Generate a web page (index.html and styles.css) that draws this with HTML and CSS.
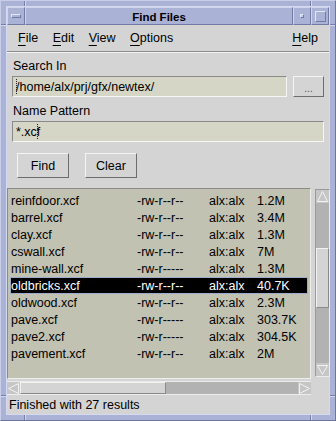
FILE: index.html
```html
<!DOCTYPE html>
<html>
<head>
<meta charset="utf-8">
<title>Find Files</title>
<link rel="stylesheet" href="styles.css">
</head>
<body>
<div class="window">
  <div class="inner">
    <div class="titlebar">
      <div class="tb-btn tb-menu"><span class="minus"></span></div>
      <div class="tb-title">Find Files</div>
      <div class="tb-btn tb-min"><span class="dot"></span></div>
      <div class="tb-btn tb-max"><span class="sq"></span></div>
    </div>
    <div class="client">
      <div class="menubar">
        <span class="mi"><u>F</u>ile</span>
        <span class="mi"><u>E</u>dit</span>
        <span class="mi"><u>V</u>iew</span>
        <span class="mi"><u>O</u>ptions</span>
        <span class="mi help"><u>H</u>elp</span>
      </div>
      <div class="form">
        <div class="label">Search In</div>
        <div class="pathrow">
          <div class="input path"><span class="caret"></span>/home/alx/prj/gfx/newtex/</div>
          <div class="btn dots">...</div>
        </div>
        <div class="label label2">Name Pattern</div>
        <div class="input pattern">*.xc<span class="caret"></span>f</div>
        <div class="buttons">
          <div class="btn act">Find</div>
          <div class="btn act">Clear</div>
        </div>
      </div>
      <div class="results">
        <div class="list">
          <div class="row"><span>reinfdoor.xcf</span><span>-rw-r--r--</span><span>alx:alx</span><span>1.2M</span></div>
          <div class="row"><span>barrel.xcf</span><span>-rw-r--r--</span><span>alx:alx</span><span>3.4M</span></div>
          <div class="row"><span>clay.xcf</span><span>-rw-r--r--</span><span>alx:alx</span><span>1.3M</span></div>
          <div class="row"><span>cswall.xcf</span><span>-rw-r--r--</span><span>alx:alx</span><span>7M</span></div>
          <div class="row"><span>mine-wall.xcf</span><span>-rw-r-----</span><span>alx:alx</span><span>1.3M</span></div>
          <div class="row sel"><span>oldbricks.xcf</span><span>-rw-r--r--</span><span>alx:alx</span><span>40.7K</span></div>
          <div class="row"><span>oldwood.xcf</span><span>-rw-r--r--</span><span>alx:alx</span><span>2.3M</span></div>
          <div class="row"><span>pave.xcf</span><span>-rw-r-----</span><span>alx:alx</span><span>303.7K</span></div>
          <div class="row"><span>pave2.xcf</span><span>-rw-r-----</span><span>alx:alx</span><span>304.5K</span></div>
          <div class="row"><span>pavement.xcf</span><span>-rw-r--r--</span><span>alx:alx</span><span>2M</span></div>
        </div>
        <div class="vscroll">
          <div class="arrow"><svg width="13" height="13" viewBox="0 0 13 13"><polygon points="6.5,1.5 11.5,11.5 1.5,11.5" fill="none" stroke="#f2f2f2" stroke-width="1"/></svg></div>
          <div class="vtrack">
            <div class="vthumb"></div>
          </div>
          <div class="arrow"><svg width="13" height="12" viewBox="0 0 13 12"><polygon points="1.5,1.5 11.5,1.5 6.5,10.5" fill="none" stroke="#f2f2f2" stroke-width="1"/></svg></div>
        </div>
        <div class="hscroll">
          <div class="arrow h"><svg width="13" height="13" viewBox="0 0 13 13"><polygon points="1.5,6.5 11.5,1.5 11.5,11.5" fill="none" stroke="#f2f2f2" stroke-width="1"/></svg></div>
          <div class="htrack"><div class="hthumb"></div></div>
          <div class="arrow h"><svg width="13" height="13" viewBox="0 0 13 13"><polygon points="1.5,1.5 11.5,6.5 1.5,11.5" fill="none" stroke="#f2f2f2" stroke-width="1"/></svg></div>
        </div>
      </div>
      <div class="status">Finished with 27 results</div>
    </div>
  </div>
</div>
</body>
</html>
```
FILE: styles.css
```css
* { box-sizing: border-box; }
html, body { margin: 0; padding: 0; }
body {
  background: #aab2d6;
  font-family: "Liberation Sans", Arial, sans-serif;
  font-size: 12.5px;
  color: #000;
}
.window {
  width: 336px;
  height: 421px;
  padding: 5px;
  border: 1px solid;
  border-color: #c9cee9 #6e769e #6e769e #c9cee9;
  background-color: #aab2d6;
  background-origin: border-box;
  background-image:
    linear-gradient(to right, transparent 24px, #767ea8 24px, #767ea8 25px, #d4d8ef 25px, #d4d8ef 26px, transparent 26px, transparent 310px, #767ea8 310px, #767ea8 311px, #d4d8ef 311px, #d4d8ef 312px, transparent 312px),
    linear-gradient(to bottom, transparent 24px, #767ea8 24px, #767ea8 25px, #d4d8ef 25px, #d4d8ef 26px, transparent 26px, transparent 395px, #767ea8 395px, #767ea8 396px, #d4d8ef 396px, #d4d8ef 397px, transparent 397px);
}
.inner {
  height: 100%;
  border: 1px solid #d6daf0;
  display: flex;
  flex-direction: column;
}
.titlebar {
  height: 18px;
  display: flex;
  flex: none;
  background: #aab2d6;
}
.tb-btn, .tb-title {
  border: 1px solid;
  border-color: #d0d5ee #737ba5 #737ba5 #d0d5ee;
  display: flex;
  align-items: center;
  justify-content: center;
}
.tb-btn { width: 18px; flex: none; }
.tb-title {
  flex: 1;
  font-weight: bold;
  font-size: 11.5px;
  padding-top: 1px;
}
.minus {
  width: 10px;
  height: 4px;
  border: 1px solid;
  border-color: #e2e6f8 #737ba5 #737ba5 #e2e6f8;
}
.dot {
  width: 4px;
  height: 4px;
  border: 1px solid;
  border-color: #e2e6f8 #737ba5 #737ba5 #e2e6f8;
  background: #c8cde8;
}
.sq {
  width: 11px;
  height: 11px;
  border: 1px solid;
  border-color: #e2e6f8 #737ba5 #737ba5 #e2e6f8;
}
.client {
  flex: 1;
  background: #d4d4d4;
  display: flex;
  flex-direction: column;
}
.menubar {
  height: 27px;
  flex: none;
  display: flex;
  align-items: center;
  padding: 0 11px 1px 11px;
  gap: 14.5px;
  border-bottom: 1px solid #8c8c8c;
  box-shadow: 0 1px 0 #f2f2f2;
}
.mi u {
  text-decoration: underline;
  text-underline-offset: 3px;
  text-decoration-thickness: 1px;
}
.help { margin-left: auto; }
.form {
  padding: 6px 5px 0 5px;
  display: flex;
  flex-direction: column;
  flex: none;
}
.label {
  height: 16px;
  line-height: 16px;
  margin-bottom: 2px;
  padding-left: 1px;
}
.label2 { margin-top: 6px; }
.pathrow {
  display: flex;
  gap: 6px;
}
.input {
  height: 21px;
  background: #d6d6c6;
  border: 1px solid;
  border-color: #8a8a8a #f6f6f6 #f6f6f6 #8a8a8a;
  display: flex;
  align-items: center;
  padding-left: 3px;
  white-space: nowrap;
}
.path { flex: 1; }
.caret {
  display: inline-block;
  width: 3px;
  height: 15px;
  margin-right: -2px;
  margin-left: -1px;
  border-left: 1px dotted #222;
  position: relative;
  left: 1px;
}
.btn {
  background: #d4d4d4;
  border: 1px solid;
  border-color: #f4f4f4 #6c6c6c #6c6c6c #f4f4f4;
  display: flex;
  align-items: center;
  justify-content: center;
}
.dots {
  width: 31px;
  height: 21px;
  color: #555;
  font-size: 10px;
  padding-top: 3px;
}
.buttons {
  display: flex;
  gap: 16px;
  margin: 11px 0 0 5px;
}
.act {
  height: 25px;
  width: 52px;
}
.results {
  margin-top: 10px;
  display: grid;
  grid-template-columns: 304px 1fr;
  grid-template-rows: 191px auto;
  row-gap: 2px;
}
.list {
  background: #c2c2b2;
  border: 1px solid;
  border-color: #8a8a8a #eeeeee #eeeeee #8a8a8a;
  padding-top: 3px;
  overflow: hidden;
}
.row {
  height: 17px;
  margin: 0 2px 0 2px;
  padding-left: 1px;
  display: grid;
  grid-template-columns: 126px 72px 48px 1fr;
  align-items: center;
  white-space: nowrap;
}
.row.sel {
  background: #000;
  color: #fff;
  box-shadow: inset 0 0 0 1px #9cacca;
}
.vscroll {
  margin: 1px 1px 0 4px;
  height: 188px;
  display: flex;
  flex-direction: column;
  background: #b2b2b2;
  border: 1px solid;
  border-color: #9a9a9a #ececec #ececec #9a9a9a;
}
.arrow {
  flex: none;
  height: 13px;
  display: flex;
  align-items: center;
  justify-content: center;
  background: #c6c6c6;
}
.arrow svg { display: block; }
.vtrack {
  flex: 1;
  padding-top: 45px;
}
.vthumb {
  height: 60px;
  background: #d4d4d4;
  border: 1px solid;
  border-color: #f2f2f2 #8a8a8a #8a8a8a #f2f2f2;
}
.hscroll {
  height: 14px;
  display: flex;
  background: #b2b2b2;
  border-top: 1px solid #ececec;
  border-bottom: 1px solid #ececec;
}
.arrow.h {
  width: 13px;
  height: 12px;
}
.htrack {
  flex: 1;
  display: flex;
}
.hthumb {
  width: 146px;
  background: #d4d4d4;
  border: 1px solid;
  border-color: #f2f2f2 #8a8a8a #8a8a8a #f2f2f2;
}
.status {
  flex: 1;
  display: flex;
  align-items: center;
  padding-left: 2px;
  padding-top: 1px;
}
```
